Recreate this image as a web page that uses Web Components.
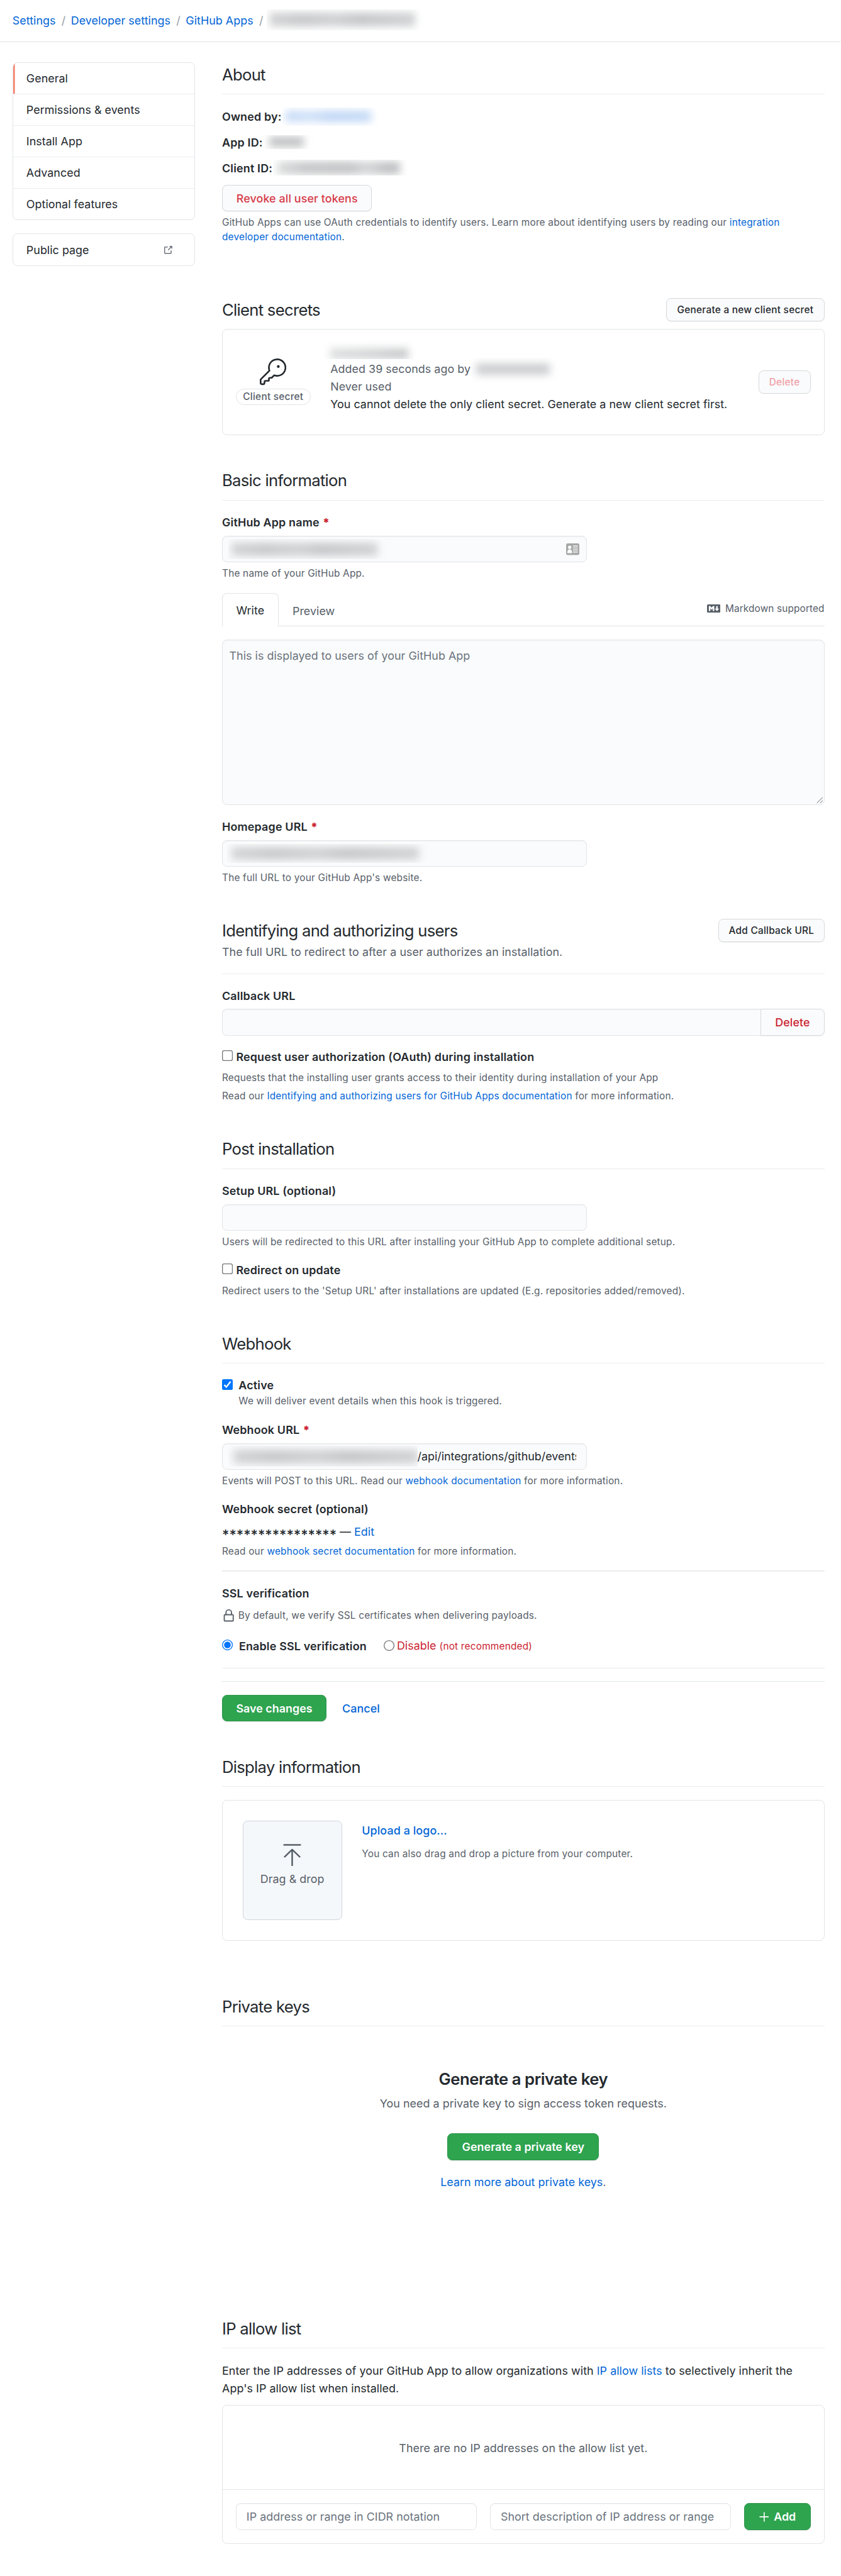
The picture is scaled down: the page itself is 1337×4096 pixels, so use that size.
<!DOCTYPE html>
<html lang="en">
<head>
<meta charset="utf-8">
<title>GitHub App settings</title>
<style>
html{background:#fff}
body{margin:0;zoom:1.3173;font-family:Inter,"Liberation Sans",sans-serif;font-size:13.6px;line-height:21px;letter-spacing:.015px;color:#24292e;
--fs12:11.7px;--fs20:19.5px;--ls12:.14px;--ls12m:.18px;--ls14b:.12px;--ls14m:.06px;--ls20:-.55px;--ls20b:-.35px}
</style>
</head>
<body>
<app-settings></app-settings>
<script>
const define = (name, css, html) => {
  const tpl = document.createElement('template');
  tpl.innerHTML = `<style>*{box-sizing:border-box}:host{display:block;box-sizing:border-box}a{color:#0366d6;text-decoration:none}${css}</style>${html}`;
  customElements.define(name, class extends HTMLElement {
    constructor() {
      super();
      this.attachShadow({ mode: 'open' }).append(tpl.content.cloneNode(true));
    }
  });
};

/* Blurred-out private value: clipped box holding a soft smear */
define('redacted-value', `
:host{display:inline-block;flex:none;overflow:hidden;width:var(--w);height:var(--h);margin:var(--m,0)}
i{display:block;height:100%;padding:var(--p,4px 11px 4px 4px)}
b{display:block;height:100%;filter:blur(4.800px);background:var(--smear,linear-gradient(90deg,#d3d4d5,#c8c9cb 22%,#d0d1d3 45%,#c6c7ca 62%,#ccced0 85%,#d0d1d3))}`, `<i><b></b></i>`);

define('section-heading', `
:host{height:39px;border-bottom:1px solid #eaecef;font-size:var(--fs20);line-height:30px;letter-spacing:var(--ls20)}`, `<slot></slot>`);

define('page-section', `:host{height:var(--h)}`, `<slot></slot>`);

define('ui-note', `:host{font-size:var(--fs12);line-height:18px;color:#586069;letter-spacing:var(--ls12);padding-top:.5px;margin-bottom:-.5px}`, `<slot></slot>`);

define('ui-label', `
:host{font-weight:600;height:21px;padding-top:.5px;letter-spacing:var(--ls14b);white-space:nowrap}
b{display:none;color:#cb2431;margin-left:4px}:host([required]) b{display:inline}`, `<slot></slot><b>*</b>`);

define('ui-button', `
:host{display:flex;flex:none;align-items:center;justify-content:center;height:32px;width:var(--w);padding-top:1px;border:1px solid #d5d8da;border-radius:6px;
background:#fafbfc;font-weight:500;white-space:nowrap;box-shadow:0 1px 0 rgba(27,31,35,.04);letter-spacing:var(--ls14m)}
:host([small]){height:28px;font-size:var(--fs12);line-height:18px;letter-spacing:var(--ls12m)}
:host([tone=danger]){color:#d73a49}
:host([tone=faded]){color:#f0a0a7;box-shadow:none}
:host([tone=primary]){background:#2ea44f;border-color:#2b944a;color:#fff;font-weight:600;letter-spacing:0;box-shadow:0 1px 0 rgba(27,31,35,.1)}`, `<slot></slot>`);

define('text-input', `
:host{display:flex;align-items:center;width:440px;height:32px;padding:0 8px 0 7px;margin:6px 0 4px;border:1px solid #e1e4e8;border-radius:6px;background:#fafbfc;
box-shadow:inset 0 1px 0 rgba(225,228,232,.3);white-space:nowrap}`, `<slot></slot>`);

define('check-box', `
:host{display:block;flex:none;width:13px;height:13px}
svg{display:block;width:13px;height:13px}
.on{display:none}:host([checked]) .on{display:block}:host([checked]) .off{display:none}`,
`<svg class="off" viewBox="0 0 13 13"><rect x=".5" y=".5" width="12" height="12" rx="2" fill="#fff" stroke="#767676"/></svg>
<svg class="on" viewBox="0 0 13 13"><rect width="13" height="13" rx="2" fill="#0075ff"/><path d="M2.7 6.9 5.2 9.4 10.3 2.9" fill="none" stroke="#fff" stroke-width="1.8"/></svg>`);

define('radio-dot', `
:host{display:block;flex:none;width:13px;height:13px}
svg{display:block;width:13px;height:13px}
.on{display:none}:host([checked]) .on{display:block}:host([checked]) .off{display:none}`,
`<svg class="off" viewBox="0 0 13 13"><circle cx="6.5" cy="6.5" r="6" fill="#fff" stroke="#767676"/></svg>
<svg class="on" viewBox="0 0 13 13"><circle cx="6.5" cy="6.5" r="6" fill="#fff" stroke="#0075ff"/><circle cx="6.5" cy="6.5" r="4" fill="#0075ff"/></svg>`);

define('bread-crumbs', `
:host{display:flex;align-items:center;height:51px;padding:0 15px 1px;border-bottom:1px solid #e1e4e8;white-space:nowrap}
s{text-decoration:none;color:#959da5;margin:0 6.500px 0 7px}`,
`<a>Settings</a><s>/</s><a>Developer settings</a><s>/</s><a>GitHub Apps</a><s>/</s><redacted-value style="--w:190px;--h:25px;--m:0 0 2px -2px;--p:4px 11px 4px 3px"></redacted-value>`);

define('menu-item', `
:host{display:flex;align-items:center;justify-content:space-between;height:38px;padding:1px 26px 0 16px;border-bottom:1px solid #eaecef}
:host(:last-child){border-bottom:0;height:37px}
:host([current]){box-shadow:inset 2px 0 0 #f9826c}`, `<slot></slot>`);

define('side-menu', `:host{border:1px solid #e1e4e8;border-radius:6px;overflow:hidden;margin-bottom:16px}`, `<slot></slot>`);

define('side-bar', `:host{width:220.500px;flex:none}svg{display:block}`,
`<side-menu style="height:191px"><menu-item current>General</menu-item><menu-item>Permissions &amp; events</menu-item><menu-item>Install App</menu-item><menu-item>Advanced</menu-item><menu-item>Optional features</menu-item></side-menu>
<side-menu style="height:39px"><menu-item>Public page<svg width="12" height="12" viewBox="0 0 16 16" fill="#6a737d"><path d="M10.6 1h4.15c.14 0 .25.11.25.25V5.4a.25.25 0 0 1-.43.18L13.03 4.03 9.28 7.78a.75.75 0 0 1-1.06-1.06l3.75-3.75-1.54-1.54A.25.25 0 0 1 10.6 1ZM3.75 2h3.5a.75.75 0 0 1 0 1.5h-3.5a.25.25 0 0 0-.25.25v8.5c0 .14.11.25.25.25h8.5a.25.25 0 0 0 .25-.25v-3.5a.75.75 0 0 1 1.500 0v3.5A1.75 1.75 0 0 1 12.25 14h-8.5A1.75 1.75 0 0 1 2 12.25v-8.5C2 2.78 2.78 2 3.75 2Z"/></svg></menu-item></side-menu>`);

define('about-section', `
.row{display:flex;align-items:center;height:21px;margin-bottom:10px}
.row:first-of-type{margin-top:16px}`,
`<page-section style="--h:284px"><section-heading>About</section-heading>
<div class="row"><ui-label>Owned by:</ui-label><redacted-value style="--w:118px;--h:22px;--m:0 0 0 1px;--smear:linear-gradient(90deg,#c6dbf7,#d0e1f8 30%,#c1d7f6 50%,#c4daf6)"></redacted-value></div>
<div class="row"><ui-label>App ID:</ui-label><redacted-value style="--w:60px;--h:17px;--m:0 0 0 2px;--p:2px 12px 2px 6px;--smear:#c1c3c4"></redacted-value></div>
<div class="row"><ui-label>Client ID:</ui-label><redacted-value style="--w:164px;--h:19px;--m:0 0 0 1px;--p:2px 11px 2px 4px;--smear:linear-gradient(90deg,#dcdddd,#c5c6c8 22%,#c2c3c5 60%,#d4d5d6 72%,#bfc0c2 90%)"></redacted-value></div>
<ui-button tone="danger" style="--w:181px;margin-bottom:4px">Revoke all user tokens</ui-button>
<ui-note>GitHub Apps can use OAuth credentials to identify users. Learn more about identifying users by reading our <a>integration<br>developer documentation</a>.</ui-note></page-section>`);

define('secrets-section', `
.head{display:flex;justify-content:space-between;align-items:center;height:30px}
.title{font-size:var(--fs20);line-height:30px;letter-spacing:var(--ls20)}
.card{display:flex;height:128px;margin-top:8px;padding:16px;border:1px solid #e1e4e8;border-radius:6px}
.key{display:flex;flex-direction:column;align-items:center;justify-content:center;gap:4px;width:90px;margin-right:24px}
.pill{height:20px;width:90px;border:1px solid #e1e4e8;border-radius:10px;font-size:var(--fs12);line-height:18.500px;font-weight:500;color:#586069;text-align:center;white-space:nowrap;letter-spacing:var(--ls12m)}
.info{flex:1;white-space:nowrap}.info div{display:flex;align-items:center;height:21px;padding-top:1px}.muted{color:#586069}
.card ui-button{align-self:center}`,
`<page-section style="--h:206px"><div class="head"><span class="title">Client secrets</span><ui-button small style="--w:191px">Generate a new client secret</ui-button></div>
<div class="card"><div class="key"><svg width="32" height="32" viewBox="0 0 24 24" fill="#24292e"><path fill-rule="evenodd" d="M16.75 8.5a1.25 1.25 0 1 0 0-2.5 1.25 1.25 0 0 0 0 2.5Z"/><path fill-rule="evenodd" d="M15.75 0a8.25 8.25 0 0 0-7.851 10.79L.513 18.178A1.75 1.75 0 0 0 0 19.414v2.836C0 23.217.784 24 1.75 24h1.5A1.75 1.75 0 0 0 5 22.25v-1a.25.25 0 0 1 .25-.25h2.735a.75.75 0 0 0 .545-.22l.214-.213A.875.875 0 0 0 9 19.948V18.5a.25.25 0 0 1 .25-.25h1.086c.464 0 .91-.184 1.237-.513l1.636-1.636A8.25 8.25 0 1 0 15.75 0ZM9 8.25a6.75 6.75 0 1 1 4.288 6.287.75.75 0 0 0-.804.168l-1.971 1.972a.25.25 0 0 1-.177.073H9.25A1.75 1.75 0 0 0 7.5 18.5v1H5.25a1.75 1.75 0 0 0-1.75 1.75v1a.25.25 0 0 1-.25.25h-1.5a.25.25 0 0 1-.25-.25v-2.836a.25.25 0 0 1 .073-.177l7.722-7.721a.75.75 0 0 0 .168-.804A6.73 6.73 0 0 1 9 8.25Z"/></svg><span class="pill">Client secret</span></div>
<div class="info"><div><redacted-value style="--w:112px;--h:24px;--m:-7px 0 0 -8px;--p:11px 10px 0 8px;--smear:linear-gradient(90deg,#dcddde,#d5d6d7 40%,#c6c7c9)"></redacted-value></div>
<div class="muted">Added 39 seconds ago by<redacted-value style="--w:106px;--h:30px;--m:2px 0 0 1px;--p:7px 11px 9px 6px;--smear:#cccdd0"></redacted-value></div>
<div class="muted">Never used</div><div>You cannot delete the only client secret. Generate a new client secret first.</div></div>
<ui-button small tone="faded" style="--w:63px">Delete</ui-button></div></page-section>`);

define('basic-section', `
ui-label{margin-top:16px}
.tabs{display:flex;height:40px;margin-top:15px;border-bottom:1px solid #e1e4e8}
.tab{width:68px;height:40px;border:1px solid #e1e4e8;border-bottom:0;border-radius:6px 6px 0 0;background:#fff;text-align:center;padding-top:10px}
.plain{padding:11px 0 0 17px;flex:1;color:#586069}
.md{display:flex;align-items:center;gap:6px;font-size:var(--fs12);line-height:18px;color:#586069;height:37px;letter-spacing:.08px}
.area{display:flex;justify-content:space-between;height:200px;margin-top:16px;padding:8.500px 1px 1px 8px;border:1px solid #e1e4e8;border-radius:6px;background:#fafbfc;color:#6a737d;box-shadow:inset 0 1px 0 rgba(225,228,232,.3)}
.area svg{align-self:flex-end}.card{margin-left:auto}`,
`<page-section style="--h:543px"><section-heading>Basic information</section-heading>
<ui-label required>GitHub App name</ui-label>
<text-input><redacted-value style="--w:191px;--h:24px"></redacted-value><svg class="card" width="16" height="14" viewBox="0 0 16 14"><rect width="16" height="14" rx="2" fill="#a6a6a6"/><circle cx="4.3" cy="4.7" r="2" fill="#fafbfc"/><path d="M1.4 11.7c0-3 1.2-4.4 2.9-4.4s2.9 1.4 2.9 4.4Z" fill="#fafbfc"/><path d="M8.2 3.2h6M8.2 5.6h6M8.2 8h6M8.2 10.5h6" stroke="#fafbfc" stroke-width="1.1"/></svg></text-input>
<ui-note>The name of your GitHub App.</ui-note>
<div class="tabs"><div class="tab">Write</div><div class="plain">Preview</div><div class="md"><svg width="16" height="10" viewBox="0 0 16 10"><rect width="16" height="10" rx="1.2" fill="#586069"/><path d="M2.2 8V2H4l1.5 2L7 2h1.8v6H7V4.7L5.5 6.6 4 4.7V8ZM12 8.2 9.400 5.200h1.700V2h1.800v3.200h1.700Z" fill="#fff"/></svg>Markdown supported</div></div>
<div class="area">This is displayed to users of your GitHub App<svg width="8" height="8" viewBox="0 0 8 8"><path d="M.5 7.500 7.500.5M4.500 7.500 7.500 4.500" stroke="#555" stroke-width=".7"/></svg></div>
<ui-label required style="margin-top:15px">Homepage URL</ui-label>
<text-input><redacted-value style="--w:243px;--h:23px;--m:0 0 0 -2px;--p:4px 11px 4px 6px"></redacted-value></text-input>
<ui-note>The full URL to your GitHub App's website.</ui-note></page-section>`);

define('callback-section', `
.head{display:flex;justify-content:space-between;height:68px;border-bottom:1px solid #eaecef;padding-top:1px}
.title{font-size:var(--fs20);line-height:30px;letter-spacing:var(--ls20);margin-top:-1px}.sub{color:#586069;padding-top:.500px;letter-spacing:.035px}
.group{display:flex;margin:6px 0 15px}.group text-input{flex:1;width:auto;margin:0;border-radius:6px 0 0 6px;border-right:0}
.group ui-button{border-radius:0 6px 6px 0;color:#cb2431}
.check{display:flex;gap:4px;padding-top:3px;height:21px;margin-bottom:5.600px}.check ui-label{margin-top:-3px}`,
`<page-section style="--h:264px"><div class="head"><div><div class="title">Identifying and authorizing users</div><div class="sub">The full URL to redirect to after a user authorizes an installation.</div></div><ui-button small style="--w:128px">Add Callback URL</ui-button></div>
<ui-label style="margin-top:15px">Callback URL</ui-label>
<div class="group"><text-input></text-input><ui-button style="--w:77px">Delete</ui-button></div>
<div class="check"><check-box></check-box><ui-label>Request user authorization (OAuth) during installation</ui-label></div>
<ui-note style="margin-bottom:3.500px">Requests that the installing user grants access to their identity during installation of your App</ui-note>
<ui-note>Read our <a>Identifying and authorizing users for GitHub Apps documentation</a> for more information.</ui-note></page-section>`);

define('install-section', `
.check{display:flex;gap:4px;padding-top:3px;height:21px;margin:15px 0 5.500px}.check ui-label{margin-top:-3px}`,
`<page-section style="--h:235px"><section-heading>Post installation</section-heading>
<ui-label style="margin-top:15.500px">Setup URL (optional)</ui-label><text-input></text-input>
<ui-note>Users will be redirected to this URL after installing your GitHub App to complete additional setup.</ui-note>
<div class="check"><check-box></check-box><ui-label>Redirect on update</ui-label></div>
<ui-note>Redirect users to the 'Setup URL' after installations are updated (E.g. repositories added/removed).</ui-note></page-section>`);

define('webhook-section', `
.check{display:flex;gap:7px;padding-top:4px;height:21px;margin-top:15px}.check ui-label{margin-top:-4px}
ui-label.gap{margin-top:15px}.url{width:192px;overflow:hidden;letter-spacing:-.02px}
.secret{display:flex;height:21px;margin:6px 0 4px;padding-top:.500px;white-space:pre}.stars{width:142px;font-size:16.600px;font-weight:500;letter-spacing:0;padding-top:4px}
hr{border:0;height:1px;margin:0;background:#eaecef}
.lock{display:flex;align-items:center;gap:4.500px;height:18px;margin:7px 0 17px}
.radios{display:flex;height:21px;margin-bottom:16px;padding-top:3px}.radios>*{white-space:nowrap}
.off{color:#cb2431;margin:-2.500px 0 0 3px}.off small{font-size:var(--fs12);letter-spacing:var(--ls12)}
.actions{display:flex;align-items:center;gap:19px;margin-top:16px}.actions a{font-weight:500;padding-top:1px;letter-spacing:var(--ls14m)}`,
`<page-section style="--h:511px"><section-heading>Webhook</section-heading>
<div class="check"><check-box checked></check-box><ui-label>Active</ui-label></div>
<ui-note style="padding-left:20px">We will deliver event details when this hook is triggered.</ui-note>
<ui-label class="gap" required>Webhook URL</ui-label>
<text-input style="padding-right:11px"><redacted-value style="--w:228px;--h:25px;--p:4px 0 4px 6px"></redacted-value><span class="url">/api/integrations/github/events</span></text-input>
<ui-note>Events will POST to this URL. Read our <a>webhook documentation</a> for more information.</ui-note>
<ui-label class="gap">Webhook secret (optional)</ui-label>
<div class="secret"><span class="stars">****************</span>— <a>Edit</a></div>
<ui-note>Read our <a>webhook secret documentation</a> for more information.</ui-note>
<hr style="margin-top:15px"><ui-label style="margin-top:16px">SSL verification</ui-label>
<div class="lock"><svg width="15" height="16" viewBox="0 0 15 16" fill="none" stroke="#586069" stroke-width="1.400"><rect x="2.700" y="7.200" width="10.800" height="7.600" rx=".8"/><path d="M4.800 7V4.500a3.300 3.300 0 0 1 6.600 0V7"/></svg><ui-note>By default, we verify SSL certificates when delivering payloads.</ui-note></div>
<div class="radios"><radio-dot checked></radio-dot><ui-label style="margin:-2.500px 0 0 7.500px;width:174.500px">Enable SSL verification</ui-label><radio-dot style="margin-top:1px"></radio-dot><div class="off">Disable <small>(not recommended)</small></div></div>
<hr><hr style="margin-top:15px;background:#e1e4e8">
<div class="actions"><ui-button tone="primary" style="--w:126px">Save changes</ui-button><a>Cancel</a></div></page-section>`);

define('display-section', `
.card{display:flex;height:169.500px;margin-top:16px;padding:24px;border:1px solid #e1e4e8;border-radius:6px}
.drop{width:120px;height:120px;padding-top:27px;border:1px solid #d1d5da;border-radius:6px;background:#f5f8fb;color:#586069;text-align:center;margin-right:24px}
.drop svg{display:block;margin:0 auto 5px}
.upload{display:inline-block;padding-top:1.200px;font-weight:500;letter-spacing:var(--ls14m);border-radius:4px;box-shadow:0 1px 0 rgba(27,31,35,.04);margin-bottom:8.500px}`,
`<page-section style="--h:289px"><section-heading>Display information</section-heading>
<div class="card"><div class="drop"><svg width="22" height="27" viewBox="0 0 22 27" fill="none" stroke="#586069" stroke-width="1.900" stroke-linecap="round" stroke-linejoin="round"><path d="M1.200 1.200h19.600M11 26V7M2 15.500 11 6.800l9 8.700"/></svg>Drag &amp; drop</div>
<div><a class="upload">Upload a logo...</a><ui-note>You can also drag and drop a picture from your computer.</ui-note></div></div></page-section>`);

define('keys-section', `
.blank{display:flex;flex-direction:column;align-items:center;margin-top:48px}
h3{margin:0 0 4px;padding-top:.4px;font-size:var(--fs20);line-height:30px;font-weight:600;letter-spacing:var(--ls20b)}p{margin:0;color:#586069}
ui-button{margin:26px 0 16px}`,
`<page-section style="--h:389px"><section-heading>Private keys</section-heading>
<div class="blank"><h3>Generate a private key</h3><p>You need a private key to sign access token requests.</p><ui-button tone="primary" style="--w:183px">Generate a private key</ui-button><p><a>Learn more about private keys</a>.</p></div></page-section>`);

define('allowlist-section', `
p{margin:16.500px 0 9.500px;letter-spacing:.03px}
.card{height:168px;border:1px solid #e1e4e8;border-radius:6px}
.empty{display:flex;align-items:center;justify-content:center;height:102px;padding-top:1px;border-bottom:1px solid #e1e4e8;color:#586069}
.form{display:flex;gap:16px;padding:16px}.form text-input{margin:0;flex:1;width:auto;padding:1px 0 0 12px;background:#fff;color:#6a737d}`,
`<page-section style="--h:313px"><section-heading>IP allow list</section-heading>
<p>Enter the IP addresses of your GitHub App to allow organizations with <a>IP allow lists</a> to selectively inherit the<br>App's IP allow list when installed.</p>
<div class="card"><div class="empty">There are no IP addresses on the allow list yet.</div>
<div class="form"><text-input>IP address or range in CIDR notation</text-input><text-input>Short description of IP address or range</text-input>
<ui-button tone="primary" style="--w:80px"><svg width="12" height="12" viewBox="0 0 12 12" style="margin-right:6px"><path d="M6 .3v11.400M.3 6h11.400" stroke="#fff" stroke-width="1.200"/></svg>Add</ui-button></div></div></page-section>`);

define('app-settings', `
.cols{display:flex;gap:32.500px;padding:24px 20px 0 15px}.main{flex:1;min-width:0}`,
`<bread-crumbs></bread-crumbs><div class="cols"><side-bar></side-bar><div class="main"><about-section></about-section><secrets-section></secrets-section><basic-section></basic-section><callback-section></callback-section><install-section></install-section><webhook-section></webhook-section><display-section></display-section><keys-section></keys-section><allowlist-section></allowlist-section></div></div>`);
</script>
</body>
</html>
